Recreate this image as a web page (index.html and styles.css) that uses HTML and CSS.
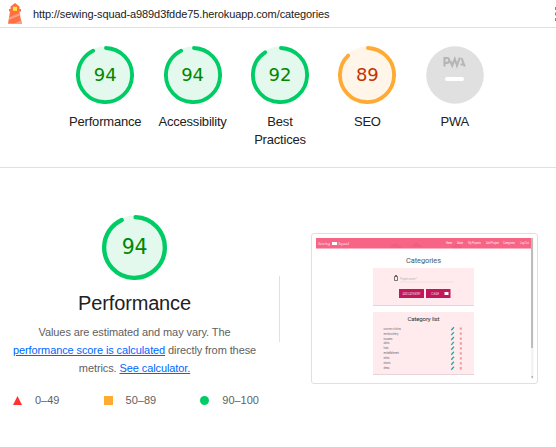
FILE: index.html
```html
<!DOCTYPE html>
<html lang="en">
<head>
<meta charset="utf-8">
<title>Lighthouse report</title>
<link rel="stylesheet" href="styles.css">
</head>
<body>
<header class="topbar">
  <svg class="logo" width="16" height="22" viewBox="0 0 16 22">
    <path d="M3.500 4.500 8 1l4.500 3.500V7H14v2.500h-1.500l1 6.500 1.500 5.800H1L3 9.500H2V7h1.500z" fill="#ff7043"/>
    <path d="M6 4.800h4v4H6z" fill="#ffeb3b"/>
    <path d="m2.200 15.500 10.700-4.500.4 2.200L1.800 18zM7 21.800l7.200-3.500.6 3.500z" fill="#ff9e80"/>
  </svg>
  <span class="url">http://sewing-squad-a989d3fdde75.herokuapp.com/categories</span>
  <svg class="menu" width="3" height="16" viewBox="0 0 3 16"><path d="M0 1h3v3H0zm0 5.500h3v3H0zM0 12h3v3H0z" fill="#888"/></svg>
</header>
<section class="scores">
  <div class="score pass">
    <div class="gauge"><svg viewBox="0 0 120 120"><circle class="disc" cx="60" cy="60" r="59"/><circle class="arc" cx="60" cy="60" r="56" pathLength="100" stroke-dasharray="92 100"/></svg><span>94</span></div>
    <div class="label">Performance</div>
  </div>
  <div class="score pass">
    <div class="gauge"><svg viewBox="0 0 120 120"><circle class="disc" cx="60" cy="60" r="59"/><circle class="arc" cx="60" cy="60" r="56" pathLength="100" stroke-dasharray="92 100"/></svg><span>94</span></div>
    <div class="label">Accessibility</div>
  </div>
  <div class="score pass">
    <div class="gauge"><svg viewBox="0 0 120 120"><circle class="disc" cx="60" cy="60" r="59"/><circle class="arc" cx="60" cy="60" r="56" pathLength="100" stroke-dasharray="90 100"/></svg><span>92</span></div>
    <div class="label">Best Practices</div>
  </div>
  <div class="score average">
    <div class="gauge"><svg viewBox="0 0 120 120"><circle class="disc" cx="60" cy="60" r="59"/><circle class="arc" cx="60" cy="60" r="56" pathLength="100" stroke-dasharray="87 100"/></svg><span>89</span></div>
    <div class="label">SEO</div>
  </div>
  <div class="score">
    <div class="gauge"><svg viewBox="0 0 58 58">
      <circle cx="29" cy="29" r="28.8" fill="#e0e0e0"/>
      <g fill="none" stroke="#b5b5b5" stroke-width="2.1">
        <path d="M18.500 20.500v-8.500h2.200q2.600 0 2.600 2.400t-2.600 2.500h-2"/>
        <path d="m24.200 15 2 4.500 2.600-6.500 2.200 6.500 2.800-8"/>
        <path d="m35.500 12 3.200 8.500M34.500 18.500h3"/>
      </g>
      <path d="M21 33h15" stroke="#fff" stroke-width="4" stroke-linecap="round"/>
    </svg></div>
    <div class="label">PWA</div>
  </div>
</section>
<main class="category">
  <section class="summary">
    <div class="score pass">
      <div class="gauge large"><svg viewBox="0 0 120 120"><circle class="disc" cx="60" cy="60" r="59"/><circle class="arc" cx="60" cy="60" r="56" pathLength="100" stroke-dasharray="92.500 100"/></svg><span>94</span></div>
    </div>
    <h1>Performance</h1>
    <p>Values are estimated and may vary. The<br><a>performance score is calculated</a> directly from these<br>metrics. <a>See calculator.</a></p>
    <div class="legend">
      <span><svg width="9" height="9"><path d="M4.500 0 9 9H0z" fill="#f33"/></svg>0–49</span>
      <span><svg width="9" height="9"><path d="M0 0h9v9H0z" fill="#fa3"/></svg>50–89</span>
      <span><svg width="9" height="9"><circle cx="4.500" cy="4.500" r="4.500" fill="#0c6"/></svg>90–100</span>
    </div>
  </section>
  <div class="divider"></div>
  <figure class="preview">
    <svg width="218" height="141" viewBox="0 0 218 141" font-family="Roboto, sans-serif">
      <path d="M0 0h217v10.500H0z" fill="#f76485"/>
      <path d="m73 9 7-4 6 5zm22 0 5-5 7 5zm40 0 7-4 4 5z" fill="#ee5f80"/>
      <g fill="#fde3e9" font-size="2.800">
        <text x="2" y="6.500" font-size="5" font-style="italic" font-family="Liberation Serif, serif" textLength="12" lengthAdjust="spacingAndGlyphs">Sewing</text>
        <path d="M16 4h5v3h-5z" fill="#fff"/>
        <text x="22" y="6.500" font-size="5" font-style="italic" font-family="Liberation Serif, serif" textLength="11" lengthAdjust="spacingAndGlyphs">Squad</text>
        <text x="130" y="6.200" textLength="6">Home</text><text x="141" y="6.200" textLength="6">About</text>
        <text x="152" y="6.200" textLength="13">My Projects</text><text x="170" y="6.200" textLength="13">Add Project</text>
        <text x="187" y="6.200" textLength="12">Categories</text><text x="204" y="6.200" textLength="9">Log Out</text>
      </g>
      <text x="107.500" y="25" text-anchor="middle" font-size="7.400" fill="#455a64" textLength="35">Categories</text>
      <path d="M57 30h101v38H57zM57 74h101v63H57z" fill="#dcccd0"/>
      <path d="M57 30h101v37.300H57zM57 74h101v62.300H57z" fill="#ffebee"/>
      <path d="M78.500 38.500h3v4h-3z" fill="none" stroke="#555" stroke-width=".8"/>
      <path d="M79 37.800h2" stroke="#333"/>
      <text x="84" y="41.500" font-size="3" fill="#bbb" textLength="17">Project name *</text>
      <path d="M84 44h54" stroke="#ddd0d3" stroke-width=".5"/>
      <path d="M83 51h25v9H83zM110 51h24.500v9H110z" fill="#c2185b"/>
      <g font-size="2.800" fill="#f1cbd9"><text x="86.500" y="56.500" textLength="18">ADD CATEGORY</text><text x="115" y="56.500" textLength="8">CLEAR</text></g>
      <path d="M128.500 54h4v3h-4z" fill="#fff"/>
      <text x="107.500" y="82.500" text-anchor="middle" font-size="6.200" fill="#333" textLength="32">Category list</text>
      <g font-size="2.800" fill="#777">
        <text x="67.500" y="91.700" textLength="17.500" lengthAdjust="spacingAndGlyphs">summer clothes</text><text x="67.500" y="96.600" textLength="15" lengthAdjust="spacingAndGlyphs">embroidery</text>
        <text x="67.500" y="101.500" textLength="9">trousers</text><text x="67.500" y="106.400" textLength="6">skirts</text>
        <text x="67.500" y="111.300" textLength="5">hats</text><text x="67.500" y="116.300" textLength="15.500">embellishment</text>
        <text x="67.500" y="121.200" textLength="6">shirts</text><text x="67.500" y="126.200" textLength="7">shorts</text><text x="67.500" y="131.200" textLength="6">dress</text>
      </g>
      <path d="m135.300 92.200 2.600-3m-2.600 7.900 2.600-3m-2.600 7.900 2.600-3m-2.600 7.900 2.600-3m-2.600 7.900 2.600-3m-2.600 8 2.600-3m-2.600 7.900 2.600-3m-2.600 8 2.600-3m-2.600 8 2.600-3" stroke="#26a69a" stroke-width="1.300"/>
      <path d="M144.800 89.500v44" stroke="#ef9a9a" stroke-width="2" stroke-dasharray="2.300 2.650"/>
      <path d="M215 0h2.500v141H215z" fill="#f3f3f3"/><path d="M215 0h2v110h-2z" fill="#bcbcbc"/>
      <path d="m215.200 138.500 1 1.500 1-1.500z" fill="#777"/>
    </svg>
  </figure>
</main>
</body>
</html>
```
FILE: styles.css
```css
* { box-sizing: border-box; }
body { margin: 0; height: 447px; overflow: hidden; background: #fff; color: #212121; font-family: "Liberation Sans", Arial, sans-serif; }
svg { display: block; }
.topbar { display: flex; height: 28px; padding-left: 7px; border-bottom: 1px solid #e0e0e0; font-size: 11px; line-height: 28px; }
.logo { margin-top: 2px; }
.url { margin-left: 10px; letter-spacing: -.1px; white-space: nowrap; }
.menu { margin: 6px -2px 0 auto; }
.scores { display: flex; height: 140px; padding: 18px 57px 0 61.5px; border-bottom: 1px solid #e0e0e0; }
.score { display: flex; flex-direction: column; align-items: center; }
.scores .score { width: 87.4px; }
.gauge { display: grid; width: 58px; height: 58px; place-items: center; }
.gauge > * { grid-area: 1 / 1; }
.gauge svg { width: 100%; height: 100%; }
.gauge span { font: 18px/1 "DejaVu Sans", sans-serif; }
.pass { --line: #0c6; --fill: #e4f9ee; --number: #080; }
.average { --line: #fa3; --fill: #fff5e8; --number: #c33300; }
.disc { fill: var(--fill); }
.arc { fill: none; stroke: var(--line); stroke-width: 8; stroke-linecap: round; transform: rotate(-88deg); transform-origin: center; }
.gauge span { color: var(--number); }
.label { width: 74px; margin-top: 9px; text-align: center; font-size: 13px; line-height: 18px; letter-spacing: -.2px; }
.category { display: flex; }
.summary { width: 269px; padding-top: 47px; }
.gauge.large { width: 65px; height: 65px; }
.gauge.large span { font-size: 20.5px; letter-spacing: -.4px; }
h1 { margin: 11px 0 0; text-align: center; font-size: 20px; font-weight: 400; line-height: 24px; letter-spacing: -.15px; }
.summary p { margin: 8px 0 0; color: #616161; text-align: center; font-size: 11px; line-height: 18px; letter-spacing: -.1px; }
.summary a { color: #06f; text-decoration: underline; }
.legend { display: flex; justify-content: space-between; padding: 0 10px 0 13px; margin-top: 15px; color: #616161; font-size: 11px; line-height: 16px; }
.legend span { display: flex; align-items: center; gap: 13px; }
.divider { width: 1px; height: 66px; margin: 108px 0 0 10px; background: #e0e0e0; }
.preview { width: 227px; height: 151px; margin: 65px 0 0 31px; padding: 4px; border: 1px solid #e0e0e0; border-radius: 3px; }
```
